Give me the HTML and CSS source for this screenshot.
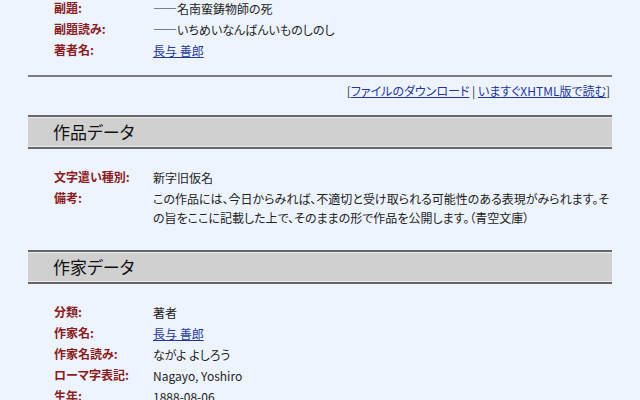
FILE: index.html
```html
<!DOCTYPE html>
<html lang="ja">
<head>
<meta charset="utf-8">
<title>図書カード</title>
<link rel="stylesheet" href="styles.css">
</head>
<body>
<div class="page">
  <dl class="data top">
    <div class="row"><dt>副題:</dt><dd>――名南蛮鋳物師の死</dd></div>
    <div class="row"><dt>副題読み:</dt><dd>――いちめいなんばんいものしのし</dd></div>
    <div class="row"><dt>著者名:</dt><dd><a href="#">長与 善郎</a></dd></div>
  </dl>
  <hr class="rule">
  <div class="links">[<a href="#">ファイルのダウンロード</a> | <a href="#">いますぐXHTML版で読む</a>]</div>
  <h2 class="section">作品データ</h2>
  <dl class="data">
    <div class="row"><dt>文字遣い種別:</dt><dd>新字旧仮名</dd></div>
    <div class="row"><dt>備考:</dt><dd class="note">この作品には、今日からみれば、不適切と受け取られる可能性のある表現がみられます。その旨をここに記載した上で、そのままの形で作品を公開します。（青空文庫）</dd></div>
  </dl>
  <h2 class="section">作家データ</h2>
  <dl class="data">
    <div class="row"><dt>分類:</dt><dd>著者</dd></div>
    <div class="row"><dt>作家名:</dt><dd><a href="#">長与 善郎</a></dd></div>
    <div class="row"><dt>作家名読み:</dt><dd>ながよ よしろう</dd></div>
    <div class="row"><dt>ローマ字表記:</dt><dd>Nagayo, Yoshiro</dd></div>
    <div class="row"><dt>生年:</dt><dd>1888-08-06</dd></div>
  </dl>
</div>
</body>
</html>
```
FILE: styles.css
```css
html, body {
  margin: 0;
  padding: 0;
  background: #eef4fd;
}
body {
  font-family: "Noto Sans CJK JP", "DejaVu Sans", sans-serif;
  font-size: 12px;
  color: #222;
  font-feature-settings: "palt";
  overflow: hidden;
}
.page {
  width: 584px;
  margin-left: 28px;
  margin-top: -2px;
}
.data {
  margin: 0;
  padding-left: 26px;
}
.row {
  display: flex;
  line-height: 20px;
  margin-bottom: 1px;
}
dt {
  width: 99px;
  flex: none;
  color: #8a1c22;
  font-weight: bold;
}
dd {
  margin: 0;
  flex: 1;
  line-height: 19px;
  padding-top: 1px;
}
a {
  color: #23379a;
  text-decoration: underline;
}
.rule {
  margin: 15px 0 0;
  border: 0;
  height: 2px;
  background: #7d7d7d;
}
.links {
  text-align: right;
  line-height: 20px;
  margin-top: 4px;
  padding-right: 2px;
  color: #333;
}
.section {
  margin: 14px 0 0;
  height: 30px;
  line-height: 30px;
  font-size: 17px;
  font-weight: normal;
  color: #111;
  background: #d0d0d0;
  border-top: 2px solid #666;
  border-bottom: 2px solid #666;
  box-shadow: inset 0 1px 0 #ececec, inset 0 -1px 0 #ececec;
  padding-left: 25px;
}
.section + .data {
  margin-top: 18px;
  margin-bottom: 23px;
}
```
